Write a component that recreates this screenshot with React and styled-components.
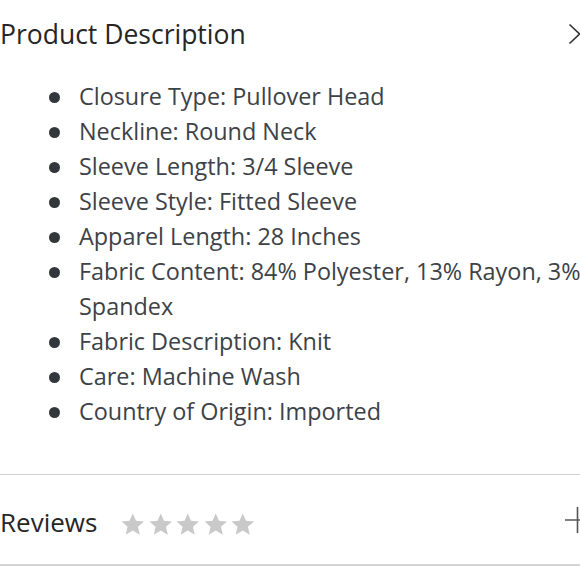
import React from 'react'
import styled, { createGlobalStyle } from 'styled-components'

const GlobalStyle = createGlobalStyle`
  html, body {
    margin: 0;
    padding: 0;
    background: #fff;
  }
  body {
    font-family: "Open Sans", "Noto Sans", sans-serif;
  }
`

const Page = styled.div`
  width: 580px;
  height: 580px;
  overflow: hidden;
  background: #fff;
`

const SectionHeader = styled.div`
  display: flex;
  align-items: center;
  justify-content: space-between;
  padding-top: 14px;
  height: 40px;
`

const Title = styled.h2`
  margin: 0;
  font-size: 26.5px;
  font-weight: 400;
  line-height: 40px;
  color: #262626;
`

const List = styled.ul`
  list-style: none;
  margin: 25px -24px 45px 0;
  padding: 0 0 0 79px;
`

const Item = styled.li`
  position: relative;
  font-size: 23.4px;
  line-height: 35px;
  color: #3d4247;

  &::before {
    content: '';
    position: absolute;
    left: -30px;
    top: 13px;
    width: 11px;
    height: 11px;
    border-radius: 50%;
    background: #33373b;
  }
`

const ReviewsRow = styled.div`
  display: flex;
  align-items: center;
  height: 89px;
  border-top: 1px solid #cfcfd8;
  border-bottom: 2px solid #d4d4d4;
`

const ReviewsLabel = styled.span`
  font-size: 26px;
  line-height: 35px;
  color: #262626;
  margin-top: 6px;
`

const Stars = styled.div`
  display: flex;
  gap: 4px;
  margin-left: 24px;
  margin-top: 10px;
`

const Spacer = styled.div`
  flex: 1;
`

const IconBox = styled.div`
  display: flex;
  align-items: center;
`

const Star = () => (
  <svg width="23.5" height="23" viewBox="0 0 24 23.5">
    <path
      d="M12 0.5l3.3 7.4 8.2.8-6.2 5.4 1.9 8L12 17.9 4.8 22.1l1.9-8L.5 8.7l8.2-.8z"
      fill="#c9c9c9"
    />
  </svg>
)

const items = [
  'Closure Type: Pullover Head',
  'Neckline: Round Neck',
  'Sleeve Length: 3/4 Sleeve',
  'Sleeve Style: Fitted Sleeve',
  'Apparel Length: 28 Inches',
  'Fabric Content: 84% Polyester, 13% Rayon, 3% Spandex',
  'Fabric Description: Knit',
  'Care: Machine Wash',
  'Country of Origin: Imported',
]

const App = () => {
  return (
    <Page>
      <GlobalStyle />
      <SectionHeader>
        <Title>Product Description</Title>
        <IconBox>
          <svg width="12" height="22" viewBox="0 0 12 22">
            <path d="M1.5 1.5l10 9.5-10 9.5" fill="none" stroke="#333" strokeWidth="1.6" />
          </svg>
        </IconBox>
      </SectionHeader>
      <List>
        {items.map((t) => (
          <Item key={t}>{t}</Item>
        ))}
      </List>
      <ReviewsRow>
        <ReviewsLabel>Reviews</ReviewsLabel>
        <Stars>
          {[0, 1, 2, 3, 4].map((i) => (
            <Star key={i} />
          ))}
        </Stars>
        <Spacer />
        <IconBox>
          <svg width="15" height="28" viewBox="0 0 15 28">
            <path d="M0 14h15M12.5 1v26" fill="none" stroke="#555" strokeWidth="1.6" />
          </svg>
        </IconBox>
      </ReviewsRow>
    </Page>
  )
}

export default App
